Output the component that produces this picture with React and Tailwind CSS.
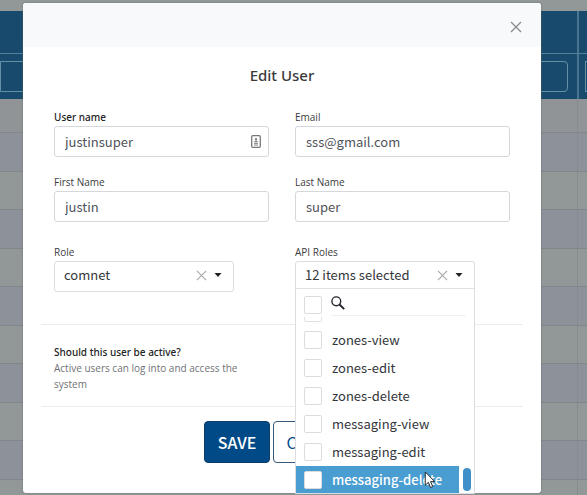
import { useState } from "react";

const LABEL = "text-[10px] leading-4";
const REGULAR = "font-['Open_Sans','Noto_Sans',sans-serif]";
const STRONG = "font-['Noto_Sans','Open_Sans',sans-serif] font-medium";
const VALUE = "font-['Noto_Sans_CJK_SC','Noto_Sans',sans-serif] text-[13px]";

const ROLES = [
  "zones-view",
  "zones-edit",
  "zones-delete",
  "messaging-view",
  "messaging-edit",
  "messaging-delete",
];

function Cross({ className }) {
  return (
    <svg viewBox="0 0 12 12" className={className} fill="none" stroke="currentColor" strokeWidth="1.3" aria-hidden="true">
      <path d="M1 1l10 10M11 1L1 11" />
    </svg>
  );
}

function Caret() {
  return (
    <svg viewBox="0 0 8 4" className="h-1 w-2 shrink-0 text-[#222]" fill="currentColor" aria-hidden="true">
      <path d="M0.5 0h7L4 4z" />
    </svg>
  );
}

function Field({ id, label, value, type = "text", strong, children }) {
  return (
    <div className="min-w-0">
      <label htmlFor={id} className={`block ${LABEL} ${strong ? `${STRONG} text-[#222]` : `${REGULAR} text-[#3c3c3c]`}`}>
        {label}
      </label>
      <div className="mt-px flex h-[31px] items-center rounded-[3px] border border-[#d5d7da] bg-white pr-[7px] pl-[10px]">
        <input
          id={id}
          type={type}
          defaultValue={value}
          className={`h-full w-full min-w-0 bg-transparent text-[#50535a] outline-none ${VALUE}`}
        />
        {children}
      </div>
    </div>
  );
}

function BackgroundTable() {
  const rows = Array.from({ length: 10 }, (_, i) => i);
  return (
    <div className="flex h-full flex-col bg-[#929898]" aria-hidden="true">
      <div className="h-[11px] shrink-0" />
      <div className="flex h-[88px] shrink-0 flex-col bg-[#174a6c]">
        <div className="flex h-[43px] border-b border-[#55809a]">
          <div className="flex-1 border-r-2 border-[#487590]" />
          <div className="w-2" />
        </div>
        <div className="flex flex-1">
          <div className="flex-1 border-r-2 border-[#487590] pt-[7px] pr-[9px] pb-[7px]">
            <div className="h-full rounded-r border border-[#6490a4]" />
          </div>
          <div className="w-2 pt-[7px] pb-[7px] pl-1.5">
            <div className="h-full border border-r-0 border-[#6490a4]" />
          </div>
        </div>
      </div>
      <div className="flex h-[34px] shrink-0 border-b border-[#80868a] bg-[#909496]">
        <div className="flex-1 border-r border-[#868b8f]" />
        <div className="w-[9px]" />
      </div>
      {rows.map((i) => (
        <div
          key={i}
          className="flex shrink-0 border-b border-[#80868a] odd:h-[38px] odd:bg-[#929898] even:h-[39px] even:bg-[#8d929a]"
        >
          <div className="flex-1 border-r border-[#868b8f]" />
          <div className="w-[9px]" />
        </div>
      ))}
    </div>
  );
}

function Tick({ label }) {
  return (
    <input
      type="checkbox"
      aria-label={label}
      className="size-[18px] shrink-0 appearance-none rounded-[2px] border border-[#dcdcdc] bg-white checked:bg-[#4a9bce]"
    />
  );
}

function RolesPicker() {
  return (
    <div className="w-[180px]">
      <span id="api-roles" className={`block ${LABEL} ${REGULAR} text-[#3c3c3c]`}>API Roles</span>
      <div className="relative mt-px h-[31px]">
        <div className="absolute inset-x-0 top-0 z-10 h-[233px] overflow-hidden rounded-t-[3px] border border-[#dcdde0] bg-white">
          <div className="flex h-[27px] items-center border-b border-[#dfe0e2] pr-[11px]">
            <button
              type="button"
              aria-labelledby="api-roles api-roles-value"
              aria-expanded="true"
              className={`flex-1 pl-[9px] text-left whitespace-nowrap text-[#33363a] ${VALUE}`}
            >
              <span id="api-roles-value">12 items selected</span>
            </button>
            <button type="button" aria-label="Clear API roles" className="mr-[7px] text-[#aaa]">
              <Cross className="size-[11px]" />
            </button>
            <Caret />
          </div>
          <div className="flex h-8 items-start pt-[7px] pr-2 pl-2">
            <Tick label="Select all roles" />
            <label className="ml-[9px] flex h-5 flex-1 items-start border-b border-[#f1f1f1]">
              <svg viewBox="0 0 14 14" className="size-[14px] shrink-0 text-[#26282e]" fill="none" stroke="currentColor" aria-hidden="true">
                <circle cx="5.3" cy="5.3" r="4.4" strokeWidth="1.4" />
                <path d="M8.5 8.5l4.7 4.6" strokeWidth="2" />
              </svg>
              <input type="search" aria-label="Search roles" className="w-full min-w-0 outline-none" />
            </label>
          </div>
          <div className="-mt-1 ml-2 h-[5px] w-[18px] rounded-b-[2px] border border-t-0 border-[#e2e2e2]" />
          <div className="flex items-end pt-1">
            <ul className="flex-1">
              {ROLES.map((role) => (
                <li key={role} className="group">
                  <label
                    className={`flex h-7 items-center pl-2 whitespace-nowrap text-[#33363a] group-last:bg-[#4a9dd0] group-last:font-medium group-last:text-white ${VALUE}`}
                  >
                    <Tick label={role} />
                    <span className="ml-[10px]">{role}</span>
                  </label>
                </li>
              ))}
            </ul>
            <div className="mr-[3px] mb-[3px] ml-1 h-[23px] w-2 rounded bg-[#3f8fca]" />
          </div>
        </div>
      </div>
    </div>
  );
}

export default function App() {
  const [role, setRole] = useState("comnet");
  return (
    <div className="relative h-screen overflow-hidden">
      <BackgroundTable />
      <div className="absolute inset-0 pt-[3px] pr-[46px] pl-[23px]">
        <form
          role="dialog"
          aria-labelledby="dialog-title"
          onSubmit={(e) => e.preventDefault()}
          className="rounded-[3px] bg-white pb-[30px] shadow-[0_0_2px_#666]"
        >
          <div className="flex h-11 items-center justify-end rounded-t-[3px] bg-[#f7f9fb] pt-1 pr-[19px]">
            <button type="button" aria-label="Close" className="text-[#8a8a8a]">
              <Cross className="size-3" />
            </button>
          </div>
          <h1 id="dialog-title" className={`pt-4 text-center text-[15px] leading-6 text-[#3a3a3a] ${STRONG}`}>
            Edit User
          </h1>
          <div className="grid grid-cols-2 gap-x-[26px] px-[31px] pt-[22px]">
            <Field id="username" label="User name" value="justinsuper" strong>
              <svg viewBox="0 0 10 13" className="h-[13px] w-[10px] shrink-0" fill="none" stroke="#77797c" aria-hidden="true">
                <rect x="0.7" y="0.7" width="8.6" height="11.6" rx="1" strokeWidth="1.3" />
                <circle cx="5" cy="4.1" r="1.1" fill="#77797c" stroke="none" />
                <path d="M5 4.5v3M3.3 6.6h3.4M3 8.4h4M3 10h4" strokeWidth="0.9" />
              </svg>
            </Field>
            <Field id="email" label="Email" type="email" value="sss@gmail.com" />
          </div>
          <div className="grid grid-cols-2 gap-x-[26px] px-[31px] pt-[17px]">
            <Field id="first-name" label="First Name" value="justin" />
            <Field id="last-name" label="Last Name" value="super" />
          </div>
          <div className="grid grid-cols-2 gap-x-[26px] px-[31px] pt-[22px]">
            <div className="w-[180px]">
              <label htmlFor="role" className={`block ${LABEL} ${REGULAR} text-[#3c3c3c]`}>Role</label>
              <div className="mt-px flex h-[31px] items-center rounded-[3px] border border-[#dcdde0] pr-[11px] pb-[3px]">
                <select
                  id="role"
                  value={role}
                  onChange={(e) => setRole(e.target.value)}
                  className={`min-w-0 flex-1 appearance-none bg-transparent pl-[9px] text-[#33363a] outline-none ${VALUE}`}
                >
                  <option value="comnet">comnet</option>
                </select>
                <button type="button" aria-label="Clear role" className="mr-[7px] text-[#aaa]">
                  <Cross className="size-[11px]" />
                </button>
                <Caret />
              </div>
            </div>
            <RolesPicker />
          </div>
          <div className="mx-[18px] mt-8 border-y border-[#ececec] px-[13px] pt-[19px] pb-[14px]">
            <div className={`w-[205px] ${LABEL}`}>
              <p className={`${STRONG} text-[#222]`}>Should this user be active?</p>
              <p className={`${REGULAR} text-[#6f7276]`}>Active users can log into and access the system</p>
            </div>
          </div>
          <div className="flex justify-center gap-[3px] pt-[14px]">
            <button
              type="submit"
              className="h-[42px] w-[66px] rounded-[4px] border border-[#0b3d66] bg-[#004b87] font-['Noto_Sans_CJK_SC','Noto_Sans',sans-serif] text-base font-medium text-white"
            >
              SAVE
            </button>
            <button
              type="button"
              className="h-[42px] w-[87px] rounded-[4px] border border-[#35597a] bg-white font-['Noto_Sans_CJK_SC','Noto_Sans',sans-serif] text-base text-[#004b87]"
            >
              CANCEL
            </button>
          </div>
        </form>
      </div>
      <svg
        viewBox="0 0 12 19"
        className="pointer-events-none absolute top-[471px] left-[424px] z-20 h-[18px] w-[12px]"
        fill="#fff"
        stroke="#222"
        strokeWidth="1"
        aria-hidden="true"
      >
        <path d="M1 1v14l3.3-3 2.3 5.5 2.3-1-2.3-5.3H11z" />
      </svg>
    </div>
  );
}
